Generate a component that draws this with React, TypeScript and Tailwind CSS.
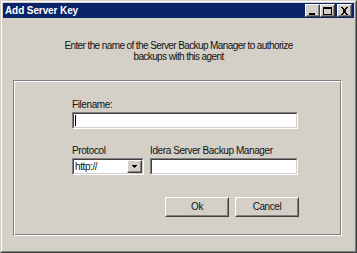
import React from 'react';

const font = { fontFamily: '"Liberation Sans", Arial, sans-serif' };

const Raised: React.FC<{ className?: string; children?: React.ReactNode }> = ({ className = '', children }) => (
  <div className={`border border-t-white border-l-white border-r-[#404040] border-b-[#404040] ${className}`}>
    <div className="w-full h-full border border-t-[#d4d0c8] border-l-[#d4d0c8] border-r-[#808080] border-b-[#808080] bg-[#d4d0c8] flex items-center justify-center">
      {children}
    </div>
  </div>
);

const Sunken: React.FC<{ className?: string; children?: React.ReactNode }> = ({ className = '', children }) => (
  <div className={`border border-t-[#808080] border-l-[#808080] border-r-white border-b-white ${className}`}>
    <div className="w-full h-full border border-t-[#404040] border-l-[#404040] border-r-[#d4d0c8] border-b-[#d4d0c8] bg-white flex items-center">
      {children}
    </div>
  </div>
);

const TitleButton: React.FC<{ kind: 'min' | 'max' | 'close' }> = ({ kind }) => (
  <Raised className="w-[15px] h-[13px]">
    <svg width="9" height="8" viewBox="0 0 9 8" shapeRendering="crispEdges">
      {kind === 'min' && <rect x="1" y="6" width="6" height="2" fill="#000" />}
      {kind === 'max' && (
        <>
          <rect x="0" y="0" width="9" height="2" fill="#000" />
          <rect x="0" y="0" width="1" height="8" fill="#000" />
          <rect x="8" y="0" width="1" height="8" fill="#000" />
          <rect x="0" y="7" width="9" height="1" fill="#000" />
        </>
      )}
      {kind === 'close' && (
        <path d="M1 0h2l1.5 2.5L6 0h2L5.5 4 8 8H6L4.5 5.5 3 8H1l2.5-4z" fill="#000" />
      )}
    </svg>
  </Raised>
);

export default function App() {
  return (
    <div
      className="w-[357px] h-[253px] border border-t-[#d4d0c8] border-l-[#d4d0c8] border-r-[#404040] border-b-[#404040]"
      style={font}
    >
      <div className="w-full h-full border border-t-white border-l-white border-r-[#808080] border-b-[#808080] bg-[#d4d0c8] p-px flex flex-col">
        <div className="h-[15px] bg-[#0a246a] flex items-center pl-[2px] pr-[2px]">
          <span className="text-white font-bold text-[10px] tracking-[-0.1px] leading-none flex-1">Add Server Key</span>
          <div className="flex items-center">
            <TitleButton kind="min" />
            <TitleButton kind="max" />
            <div className="w-[2px]" />
            <TitleButton kind="close" />
          </div>
        </div>

        <p className="mt-[22px] text-center text-[10px] tracking-[-0.6px] leading-[11px] text-[#111]">
          Enter the name of the Server Backup Manager to authorize
          <br />
          backups with this agent
        </p>

        <div className="mt-[18px] ml-[10px] w-[329px] h-[156px] border border-t-[#808080] border-l-[#808080] border-r-white border-b-white">
          <div className="w-full h-full border border-t-white border-l-white border-r-[#808080] border-b-[#808080] pl-[57px] pt-[17px] text-[10px] tracking-[-0.4px] text-[#111]">
            <div className="leading-[12px]">Filename:</div>
            <Sunken className="w-[226px] h-[17px] mt-[1px]">
              <div className="w-px h-[11px] bg-black ml-[1px]" />
            </Sunken>

            <div className="flex gap-[6px] mt-[16px]">
              <div className="flex flex-col">
                <div className="leading-[12px]">Protocol</div>
                <Sunken className="w-[72px] h-[17px] mt-[1px]">
                  <span className="flex-1 pl-[1px] leading-none">http://</span>
                  <Raised className="w-[15px] h-[13px]">
                    <svg width="5" height="3" viewBox="0 0 5 3" shapeRendering="crispEdges">
                      <path d="M0 0h5L2.5 3z" fill="#000" />
                    </svg>
                  </Raised>
                </Sunken>
              </div>
              <div className="flex flex-col">
                <div className="leading-[12px]">Idera Server Backup Manager</div>
                <Sunken className="w-[148px] h-[17px] mt-[1px]" />
              </div>
            </div>

            <div className="flex gap-[6px] mt-[22px] ml-[93px]">
              <Raised className="w-[64px] h-[20px]">
                <span className="leading-none">Ok</span>
              </Raised>
              <Raised className="w-[64px] h-[20px]">
                <span className="leading-none">Cancel</span>
              </Raised>
            </div>
          </div>
        </div>
      </div>
    </div>
  );
}
